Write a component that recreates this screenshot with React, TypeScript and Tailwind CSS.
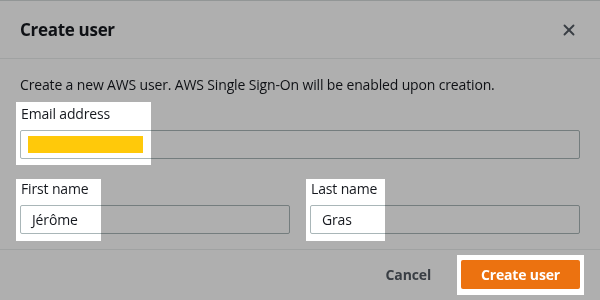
import { X } from "lucide-react";

const font = { fontFamily: '"Open Sans", "Noto Sans", sans-serif' };

const Field = ({ label, value, children }: { label: string; value?: string; children?: React.ReactNode }) => (
  <div className="flex flex-col gap-[7px]">
    <label className="text-[14px] leading-[18px] tracking-[-0.15px] text-[#16191f] pl-[1px]">{label}</label>
    <div className="h-[29px] rounded-[2px] border border-[#aab7b8] bg-white flex items-center px-[11px] text-[14px] tracking-[-0.15px] text-[#16191f]">
      {value}
      {children}
    </div>
  </div>
);

// highlight boxes undo the dim layer (color-dodge by the dim factor)
const HIGHLIGHTS = [
  "left-[16px] top-[102px] w-[135px] h-[63px]",
  "left-[16px] top-[179px] w-[85px] h-[62px]",
  "left-[306px] top-[179px] w-[79px] h-[62px]",
  "left-[457px] top-[255px] w-[127px] h-[40px]",
];

export default function App() {
  return (
    <div className="relative w-[600px] h-[300px] overflow-hidden bg-white" style={font}>
      <div className="border-t border-[#d5dbdb]">
        <div className="h-[58px] flex items-center justify-between pl-[20px] pr-[22px] border-b border-[#eaeded]">
          <h2 className="text-[17px] font-bold tracking-[-0.3px] text-[#16191f]">Create user</h2>
          <X className="w-[18px] h-[18px] text-[#545b64]" strokeWidth={2.5} />
        </div>
        <div className="px-[20px] pt-[17px] h-[191px] border-b border-[#eaeded]">
          <p className="text-[14px] leading-[18px] tracking-[-0.15px] text-[#16191f]">
            Create a new AWS user. AWS Single Sign-On will be enabled upon creation.
          </p>
          <div className="mt-[11px]">
            <Field label="Email address">
              <span className="block -ml-[4px] w-[115px] h-[17px] bg-[#ffc90b]" />
            </Field>
          </div>
          <div className="mt-[21px] grid grid-cols-2 gap-[20px]">
            <Field label="First name" value="Jérôme" />
            <Field label="Last name" value="Gras" />
          </div>
        </div>
        <div className="flex items-center justify-end gap-[30px] pr-[20px] pt-[10px]">
          <button className="text-[14px] font-bold tracking-[-0.15px] text-[#545b64]">Cancel</button>
          <button className="w-[119px] h-[29px] rounded-[2px] bg-[#ec7211] text-white text-[14px] font-bold tracking-[-0.15px]">
            Create user
          </button>
        </div>
      </div>

      <div className="absolute inset-0 bg-black/[0.314] pointer-events-none" />
      {HIGHLIGHTS.map((c) => (
        <div key={c} className={`absolute ${c} bg-[#505050] mix-blend-color-dodge pointer-events-none`} />
      ))}
    </div>
  );
}
